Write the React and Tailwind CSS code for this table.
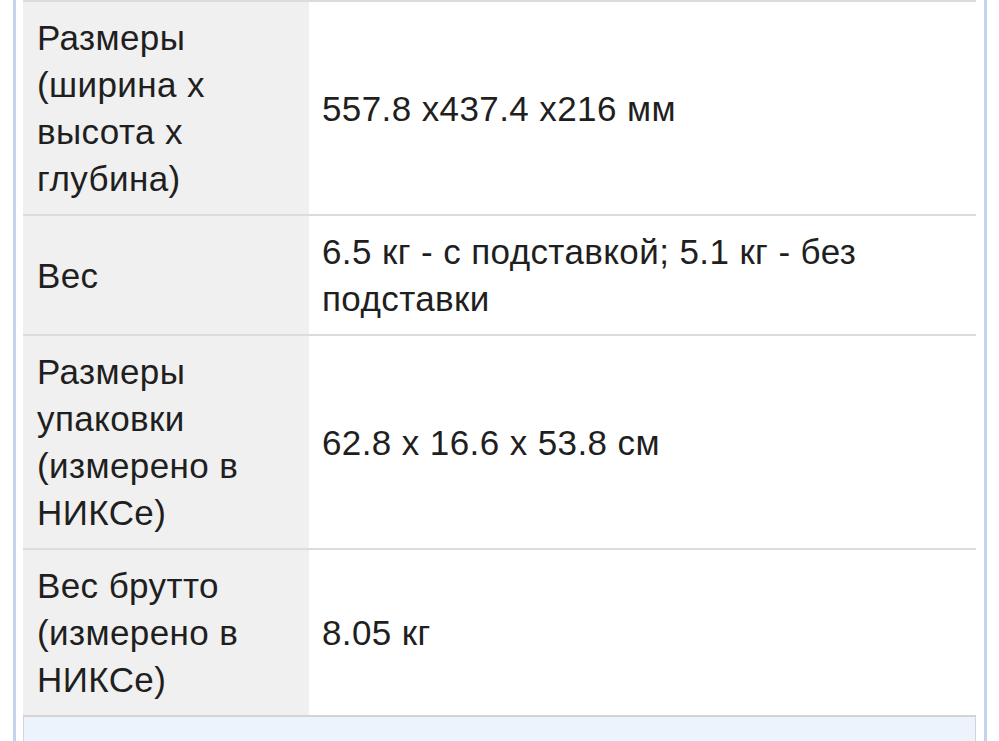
import React from "react";

// Spec rows: label on the grey side, value on the white side
const rows = [
  { label: ["Размеры", "(ширина х", "высота х", "глубина)"], value: ["557.8 x437.4 x216 мм"] },
  { label: ["Вес"], value: ["6.5 кг - с подставкой; 5.1 кг - без", "подставки"] },
  { label: ["Размеры", "упаковки", "(измерено в", "НИКСе)"], value: ["62.8 x 16.6 x 53.8 см"] },
  { label: ["Вес брутто", "(измерено в", "НИКСе)"], value: ["8.05 кг"] },
];

const SpecRow = ({ label, value }) => (
  <div className="grid grid-cols-[286px_1fr] border-t-2 border-[#dcdcdc]">
    <div className="flex flex-col justify-center bg-[#f0f0f0] pl-[14px] pr-2 py-[12px]">
      {label.map((line, i) => (
        <div key={i} className="whitespace-nowrap">{line}</div>
      ))}
    </div>
    <div className="flex flex-col justify-center bg-white pl-[13px] pr-2 py-[12px]">
      {value.map((line, i) => (
        <div key={i} className="whitespace-nowrap">{line}</div>
      ))}
    </div>
  </div>
);

const App = () => {
  return (
    <div
      className="w-[999px] h-[741px] overflow-hidden bg-white pl-[13px] pr-[12px] text-[35px] tracking-[0.4px] leading-[47px] text-[#1f1f1f]"
      style={{ fontFamily: '"Liberation Sans", Arial, sans-serif' }}>
      <div className="h-full border-x-[3px] border-[#c2d5ec] pl-[7px] pr-[8px]">
        <div className="flex flex-col">
          {rows.map((row, i) => (
            <SpecRow key={i} {...row} />
          ))}
          {/* next block, cut off at the bottom */}
          <div className="h-[40px] border-t-2 border-x border-[#d4d4d4] bg-[#edf3fc]" />
        </div>
      </div>
    </div>
  );
};

export default App;
